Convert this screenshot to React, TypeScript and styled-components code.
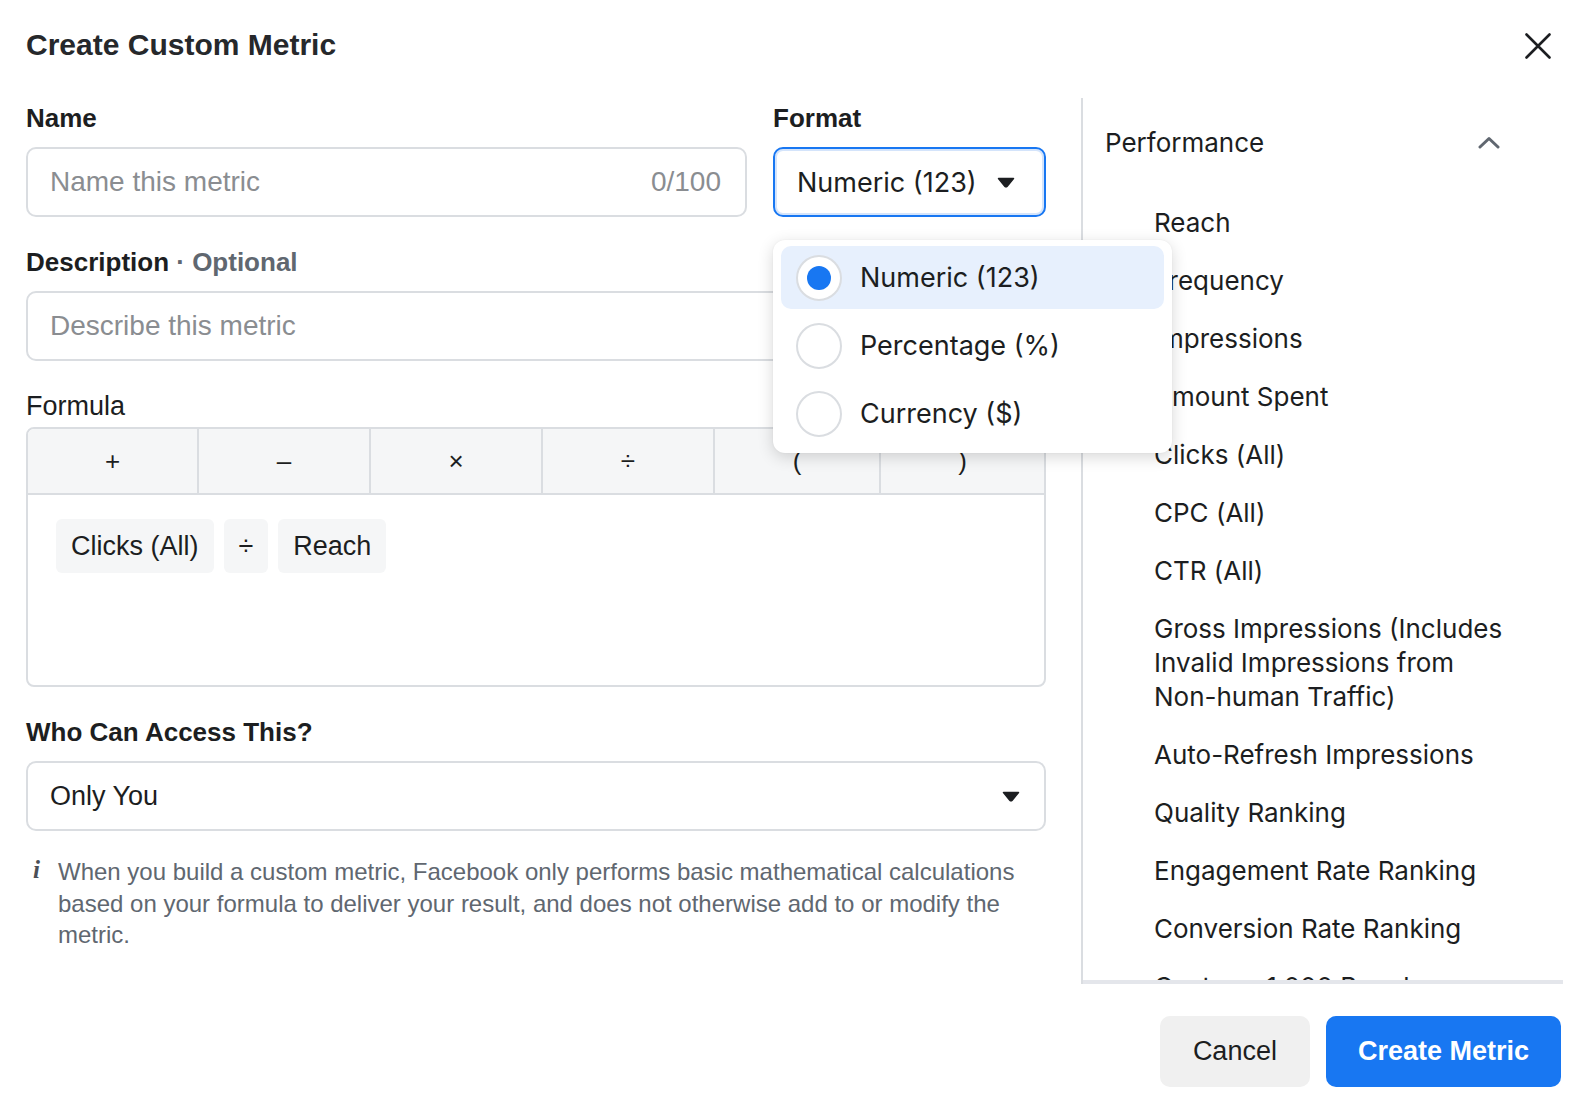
import React from "react";
import styled, { createGlobalStyle } from "styled-components";

const GlobalStyle = createGlobalStyle`
  html, body { margin: 0; padding: 0; background: #ffffff; }
  body { font-family: "Liberation Sans", Arial, sans-serif; color: #1c1e21; }
  * { box-sizing: border-box; }
`;

const Dialog = styled.div`
  width: 1588px;
  height: 1102px;
  background: #ffffff;
  padding: 0 25px 0 26px;
  display: flex;
  flex-direction: column;
  overflow: hidden;
`;

const Header = styled.header`
  height: 98px;
  display: flex;
  align-items: flex-start;
  justify-content: space-between;
`;

const Title = styled.h1`
  margin: 28px 0 0;
  font-size: 30px;
  line-height: 34px;
  font-weight: 700;
  color: #26282b;
`;

const CloseButton = styled.button`
  margin: 33px 12px 0 0;
  width: 26px;
  height: 26px;
  padding: 0;
  border: none;
  background: transparent;
  display: flex;
  cursor: pointer;
`;

const Body = styled.div`
  display: flex;
  height: 886px;
`;

const LeftColumn = styled.div`
  width: 1020px;
  flex: none;
  padding-top: 4px;
  display: flex;
  flex-direction: column;
`;

const FieldRow = styled.div`
  display: flex;
  gap: 26px;
`;

const Field = styled.div<{ $width?: number; $top?: number }>`
  position: relative;
  display: flex;
  flex-direction: column;
  width: ${(p) => (p.$width ? `${p.$width}px` : "100%")};
  margin-top: ${(p) => p.$top ?? 0}px;
`;

const Label = styled.div<{ $regular?: boolean }>`
  font-size: ${(p) => (p.$regular ? 27 : 26)}px;
  line-height: 32px;
  font-weight: ${(p) => (p.$regular ? 400 : 700)};
  color: #1c1e21;
  margin-bottom: ${(p) => (p.$regular ? 5 : 13)}px;
`;

const Optional = styled.span`
  color: #606770;
`;

const InputBox = styled.div<{ $focused?: boolean }>`
  height: 70px;
  border: 2px solid ${(p) => (p.$focused ? "#1877f2" : "#dadde1")};
  box-shadow: ${(p) => (p.$focused ? "inset 0 0 0 2px #d4e4fb" : "none")};
  border-radius: 10px;
  padding: 0 ${(p) => (p.$focused ? 29 : 24)}px 0 22px;
  display: flex;
  align-items: center;
  justify-content: space-between;
  font-size: 28px;
  background: #fff;
`;

const Placeholder = styled.span`
  color: #8a8d91;
`;

const Counter = styled.span`
  color: #8a8d91;
`;

const SelectText = styled.span<{ $sf?: boolean }>`
  color: #1c1e21;
  font-family: ${(p) => (p.$sf ? `"Inter", "Liberation Sans", sans-serif` : `"Liberation Sans", Arial, sans-serif`)};
  font-size: 27px;
`;

const Caret = styled.svg`
  width: 18px;
  height: 11px;
  flex: none;
`;

const FormulaBox = styled.div`
  height: 260px;
  border: 2px solid #dadde1;
  border-radius: 8px;
  overflow: hidden;
  display: flex;
  flex-direction: column;
`;

const Toolbar = styled.div`
  display: grid;
  grid-template-columns: 171px 172px 172px 172px 166px 1fr;
  height: 66px;
  background: #f5f6f7;
  border-bottom: 2px solid #dadde1;
`;

const ToolCell = styled.button`
  border: none;
  border-right: 2px solid #dadde1;
  background: transparent;
  font-family: "Liberation Sans", Arial, sans-serif;
  font-size: 26px;
  color: #1c1e21;
  display: flex;
  align-items: center;
  justify-content: center;
  padding: 0;
  &:last-child { border-right: none; }
`;

const Tokens = styled.div`
  display: flex;
  gap: 10px;
  padding: 24px 28px;
`;

const Token = styled.span`
  height: 54px;
  padding: 0 15px;
  background: #f5f6f7;
  border-radius: 6px;
  display: flex;
  align-items: center;
  font-size: 27px;
  color: #1c1e21;
`;

const Info = styled.div`
  display: flex;
  margin-top: 25px;
`;

const InfoIcon = styled.span`
  width: 32px;
  flex: none;
  font-family: "Liberation Serif", serif;
  font-style: italic;
  font-weight: 700;
  font-size: 25px;
  line-height: 28px;
  color: #4b4f56;
  padding-left: 7px;
`;

const InfoText = styled.p`
  margin: 0;
  font-size: 24px;
  line-height: 31.5px;
  color: #606770;
`;

const Menu = styled.div`
  position: absolute;
  top: 138px;
  left: 0;
  width: 399px;
  padding: 6px 8px 8px;
  background: #fff;
  border-radius: 12px;
  box-shadow: 0 4px 16px rgba(0, 0, 0, 0.16), 0 0 2px rgba(0, 0, 0, 0.06);
  display: flex;
  flex-direction: column;
  gap: 5px;
  z-index: 5;
`;

const Option = styled.div<{ $active?: boolean }>`
  height: 63px;
  border-radius: 10px;
  background: ${(p) => (p.$active ? "#e7f0fd" : "transparent")};
  display: flex;
  align-items: center;
  gap: 18px;
  padding-left: 15px;
  font-family: "Inter", "Liberation Sans", sans-serif;
  font-size: 27px;
  color: #1c1e21;
`;

const Radio = styled.span<{ $checked?: boolean }>`
  width: 46px;
  height: 46px;
  border-radius: 50%;
  border: 2px solid #dadde1;
  background: #fff;
  display: flex;
  align-items: center;
  justify-content: center;
  flex: none;
  &::after {
    content: "";
    width: 24px;
    height: 24px;
    border-radius: 50%;
    background: ${(p) => (p.$checked ? "#1877f2" : "transparent")};
  }
`;

const RightPanel = styled.aside`
  flex: 1;
  margin-left: 35px;
  border-left: 2px solid #dadde1;
  display: flex;
  flex-direction: column;
  font-family: "Inter", "Liberation Sans", sans-serif;
`;

const SectionHeader = styled.div`
  height: 88px;
  flex: none;
  display: flex;
  align-items: center;
  justify-content: space-between;
  padding: 0 63px 0 22px;
  font-size: 26px;
  color: #1c1e21;
`;

const MetricList = styled.ul`
  flex: 1;
  margin: 0;
  padding: 8px 49px 0 71px;
  list-style: none;
  overflow: hidden;
  border-bottom: 4px solid #e4e6eb;
`;

const MetricItem = styled.li`
  padding: 12px 0;
  font-size: 26px;
  line-height: 34px;
  color: #1c1e21;
`;

const Footer = styled.footer`
  display: flex;
  justify-content: flex-end;
  gap: 16px;
  padding: 32px 2px 0 0;
`;

const Button = styled.button<{ $primary?: boolean }>`
  height: 71px;
  border: none;
  border-radius: 10px;
  padding: 0 ${(p) => (p.$primary ? 32 : 33)}px;
  font-family: "Liberation Sans", Arial, sans-serif;
  font-size: 27px;
  font-weight: ${(p) => (p.$primary ? 700 : 400)};
  background: ${(p) => (p.$primary ? "#1877f2" : "#f0f0f0")};
  color: ${(p) => (p.$primary ? "#ffffff" : "#1c1e21")};
`;

const CaretDown = () => (
  <Caret viewBox="0 0 18 11">
    <path d="M1.5 1.5 H16.5 L10.2 9.2 Q9 10.5 7.8 9.2 Z" fill="#1c1e21" stroke="#1c1e21" strokeWidth="1.5" strokeLinejoin="round" />
  </Caret>
);

const metrics = [
  "Reach",
  "Frequency",
  "Impressions",
  "Amount Spent",
  "Clicks (All)",
  "CPC (All)",
  "CTR (All)",
  "Gross Impressions (Includes Invalid Impressions from Non-human Traffic)",
  "Auto-Refresh Impressions",
  "Quality Ranking",
  "Engagement Rate Ranking",
  "Conversion Rate Ranking",
  "Cost per 1,000 People Reached",
];

const ops = ["+", "–", "×", "÷", "(", ")"];

export default function App() {
  return (
    <>
      <GlobalStyle />
      <Dialog>
        <Header>
          <Title>Create Custom Metric</Title>
          <CloseButton aria-label="Close">
            <svg width="26" height="26" viewBox="0 0 26 26">
              <path d="M1.5 1.5 L24.5 24.5 M24.5 1.5 L1.5 24.5" stroke="#1c1e21" strokeWidth="2.6" strokeLinecap="round" />
            </svg>
          </CloseButton>
        </Header>
        <Body>
          <LeftColumn>
            <FieldRow>
              <Field $width={721}>
                <Label>Name</Label>
                <InputBox>
                  <Placeholder>Name this metric</Placeholder>
                  <Counter>0/100</Counter>
                </InputBox>
              </Field>
              <Field $width={273}>
                <Label>Format</Label>
                <InputBox $focused>
                  <SelectText $sf>Numeric (123)</SelectText>
                  <CaretDown />
                </InputBox>
                <Menu>
                  <Option $active>
                    <Radio $checked />
                    Numeric (123)
                  </Option>
                  <Option>
                    <Radio />
                    Percentage (%)
                  </Option>
                  <Option>
                    <Radio />
                    Currency ($)
                  </Option>
                </Menu>
              </Field>
            </FieldRow>
            <Field $top={29}>
              <Label>
                Description <Optional>· Optional</Optional>
              </Label>
              <InputBox>
                <Placeholder>Describe this metric</Placeholder>
              </InputBox>
            </Field>
            <Field $top={29}>
              <Label $regular>Formula</Label>
              <FormulaBox>
                <Toolbar>
                  {ops.map((o) => (
                    <ToolCell key={o}>{o}</ToolCell>
                  ))}
                </Toolbar>
                <Tokens>
                  <Token>Clicks (All)</Token>
                  <Token>÷</Token>
                  <Token>Reach</Token>
                </Tokens>
              </FormulaBox>
            </Field>
            <Field $top={29}>
              <Label>Who Can Access This?</Label>
              <InputBox>
                <SelectText>Only You</SelectText>
                <CaretDown />
              </InputBox>
            </Field>
            <Info>
              <InfoIcon>i</InfoIcon>
              <InfoText>
                When you build a custom metric, Facebook only performs basic mathematical calculations based on
                your formula to deliver your result, and does not otherwise add to or modify the metric.
              </InfoText>
            </Info>
          </LeftColumn>
          <RightPanel>
            <SectionHeader>
              Performance
              <svg width="22" height="13" viewBox="0 0 22 13">
                <path d="M2 11 L11 2.5 L20 11" fill="none" stroke="#606770" strokeWidth="3" strokeLinecap="round" strokeLinejoin="round" />
              </svg>
            </SectionHeader>
            <MetricList>
              {metrics.map((m) => (
                <MetricItem key={m}>{m}</MetricItem>
              ))}
            </MetricList>
          </RightPanel>
        </Body>
        <Footer>
          <Button>Cancel</Button>
          <Button $primary>Create Metric</Button>
        </Footer>
      </Dialog>
    </>
  );
}
